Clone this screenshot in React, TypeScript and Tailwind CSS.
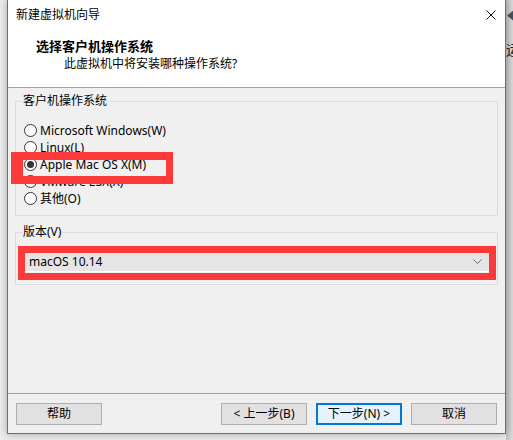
import { useState } from "react";

const osList = [
  { id: "win", label: "Microsoft Windows(W)" },
  { id: "linux", label: "Linux(L)" },
  { id: "mac", label: "Apple Mac OS X(M)" },
  { id: "esx", label: "VMware ESX(X)" },
  { id: "other", label: "其他(O)" },
];

function Radio({ checked }: { checked: boolean }) {
  return (
    <span className="w-[13px] h-[13px] rounded-full border border-[#333333] bg-white flex items-center justify-center shrink-0">
      {checked && <span className="w-[7px] h-[7px] rounded-full bg-[#333333]" />}
    </span>
  );
}

function Btn({ children, primary }: { children: React.ReactNode; primary?: boolean }) {
  return (
    <button
      className={
        primary
          ? "w-[86px] h-[22px] bg-[#e5f1fb] border-2 border-[#0078d7] text-[12px] leading-none flex items-center justify-center"
          : "w-[86px] h-[22px] bg-[#e1e1e1] border border-[#adadad] text-[12px] leading-none flex items-center justify-center"
      }
    >
      {children}
    </button>
  );
}

export default function App() {
  const [os, setOs] = useState("mac");

  return (
    <div className="relative w-[513px] h-[440px] overflow-hidden bg-[#ececec] text-black font-['Noto_Sans','Noto_Sans_CJK_SC',sans-serif]">
      {/* background app peeking on the right */}
      <div className="absolute left-[506px] top-0 w-[7px] h-[440px] bg-gradient-to-r from-[#c4c4c4] to-[#dadada]" />
      <div className="absolute left-[507px] top-[9px] w-[8px] h-[13px] bg-[#3f5366] [clip-path:polygon(0_50%,100%_0,100%_100%)]" />
      <div className="absolute left-[506px] top-[42px] w-[7px] h-[16px] overflow-hidden">
        <span className="block text-[14px] leading-4 text-[#222]">运</span>
      </div>

      {/* dialog window */}
      <div className="relative ml-[7px] w-[499px] h-[434px] bg-[#f0f0f0] border border-t-0 border-[#6e6e6e] shadow-[0_0_8px_rgba(0,0,0,0.3)] flex flex-col">
        {/* title bar */}
        <div className="h-[30px] bg-white flex items-center justify-between pl-[8px] pr-[9px]">
          <span className="text-[12px] leading-4">新建虚拟机向导</span>
          <svg width="10" height="10" viewBox="0 0 10 10">
            <path d="M0.5 0.5L9.5 9.5M9.5 0.5L0.5 9.5" stroke="#111" strokeWidth="1" />
          </svg>
        </div>

        {/* header */}
        <div className="h-[57px] bg-white border-b border-[#a0a0a0] box-content">
          <div className="pl-[28px] pt-[8px] text-[13px] leading-4 font-bold">选择客户机操作系统</div>
          <div className="pl-[56px] mt-[2px] text-[12px] leading-4">此虚拟机中将安装哪种操作系统?</div>
        </div>

        {/* body */}
        <div className="flex-1 px-[7px]">
          <fieldset className="mt-[5px] border border-[#dcdcdc] pl-[8px] pt-[13px] pb-[8px]">
            <legend className="ml-[-2px] px-[1px] text-[12px] leading-4">客户机操作系统</legend>
            {osList.map((o) => (
              <div
                key={o.id}
                onClick={() => setOs(o.id)}
                className="h-[17px] flex items-center gap-[3px] text-[12px] leading-4 cursor-default"
              >
                <Radio checked={os === o.id} />
                <span>{o.label}</span>
              </div>
            ))}
          </fieldset>

          <fieldset className="mt-[8px] border border-[#dcdcdc] pl-[9px] pr-[7px] pt-[12px] pb-[12px]">
            <legend className="ml-[-3px] px-[1px] text-[12px] leading-4">版本(V)</legend>
            <div className="h-[20px] bg-[#e5e5e5] border-b border-white flex items-center justify-between pl-[4px] pr-[8px] text-[12px]">
              <span>macOS 10.14</span>
              <svg width="9" height="6" viewBox="0 0 9 6">
                <path d="M0.5 0.5L4.5 4.5L8.5 0.5" fill="none" stroke="#6d6d6d" strokeWidth="1" />
              </svg>
            </div>
          </fieldset>
        </div>

        {/* footer */}
        <div className="border-t border-[#a0a0a0] pt-[9px] pb-[8px] px-[8px] flex items-center">
          <Btn>帮助</Btn>
          <div className="flex-1" />
          <div className="flex gap-[9px]">
            <Btn>&lt; 上一步(B)</Btn>
            <Btn primary>下一步(N) &gt;</Btn>
            <Btn>取消</Btn>
          </div>
        </div>
      </div>

      {/* red annotation boxes */}
      <div className="absolute left-[11px] top-[152px] w-[162px] h-[32px] border-[8px] border-l-[12px] border-r-[7px] border-[#fd3a3a]" />
      <div className="absolute left-[18px] top-[246px] w-[478px] h-[34px] border-[7px] border-[#fd3a3a]" />
    </div>
  );
}
